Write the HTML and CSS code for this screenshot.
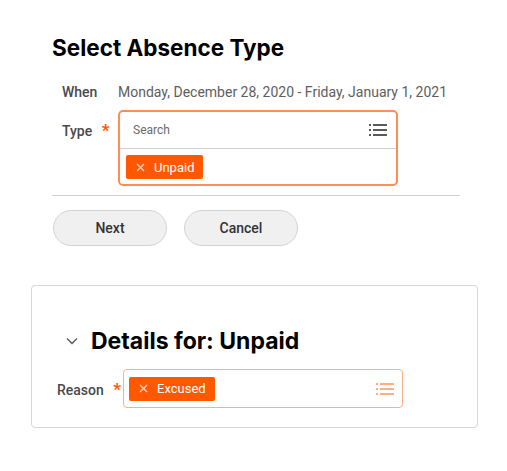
FILE: index.html
```html
<!DOCTYPE html>
<html lang="en">
<head>
    <meta charset="UTF-8">
    <meta name="viewport" content="width=device-width, initial-scale=1.0">
    <title>Select Absence Type</title>
    <link rel="stylesheet" href="styles.css">
</head>
<body>

    <div class="page">
        <section class="absence-type">
            <h1>Select Absence Type</h1>

            <div class="field-row when-row">
                <span class="field-label">When</span>
                <span class="field-value">Monday, December 28, 2020 - Friday, January 1, 2021</span>
            </div>

            <div class="field-row type-row">
                <span class="field-label">Type <span class="required">*</span></span>
                <div class="prompt prompt-open">
                    <div class="prompt-search">
                        <span class="placeholder">Search</span>
                        <svg class="list-icon" width="18" height="14" viewBox="0 0 18 14">
                            <rect x="0" y="1" width="2" height="2" />
                            <rect x="4" y="1" width="14" height="2" />
                            <rect x="0" y="6" width="2" height="2" />
                            <rect x="4" y="6" width="14" height="2" />
                            <rect x="0" y="11" width="2" height="2" />
                            <rect x="4" y="11" width="14" height="2" />
                        </svg>
                    </div>
                    <div class="prompt-selected">
                        <span class="pill">
                            <svg class="pill-x" width="9" height="9" viewBox="0 0 9 9">
                                <path d="M1 1 L8 8 M8 1 L1 8" />
                            </svg>
                            Unpaid
                        </span>
                    </div>
                </div>
            </div>

            <hr class="divider">

            <div class="actions">
                <button class="btn">Next</button>
                <button class="btn">Cancel</button>
            </div>
        </section>

        <section class="details-card">
            <div class="details-head">
                <svg class="chevron" width="12" height="8" viewBox="0 0 12 8">
                    <path d="M1 1.5 L6 6.5 L11 1.5" />
                </svg>
                <h2>Details for: Unpaid</h2>
            </div>

            <div class="field-row reason-row">
                <span class="field-label">Reason <span class="required">*</span></span>
                <div class="prompt prompt-closed">
                    <span class="pill">
                        <svg class="pill-x" width="9" height="9" viewBox="0 0 9 9">
                            <path d="M1 1 L8 8 M8 1 L1 8" />
                        </svg>
                        Excused
                    </span>
                    <svg class="list-icon light" width="18" height="14" viewBox="0 0 18 14">
                        <rect x="0" y="1" width="2" height="2" />
                        <rect x="4" y="1" width="14" height="2" />
                        <rect x="0" y="6" width="2" height="2" />
                        <rect x="4" y="6" width="14" height="2" />
                        <rect x="0" y="11" width="2" height="2" />
                        <rect x="4" y="11" width="14" height="2" />
                    </svg>
                </div>
            </div>
        </section>
    </div>

</body>
</html>
```

FILE: styles.css
```css
:root {
    --heading-color: #000000;
    --label-color: #494949;
    --value-color: #5e5e5e;
    --orange: #ff5800;
    --orange-border: #ff8d55;
    --orange-light: #ffaf85;
    --line-color: #cfcfcf;
    --btn-bg: #f0f0f0;
}

body {
    margin: 0;
    font-family: Roboto, "Liberation Sans", sans-serif;
    background: #ffffff;
}

.page {
    padding: 34px 0 0 31px;
    width: 447px;
}

/* --- top section --- */
.absence-type {
    padding-left: 21px;
    width: 408px;
}

h1 {
    margin: 0;
    font-family: Inter, sans-serif;
    font-size: 22.5px;
    line-height: 28px;
    font-weight: 700;
    color: var(--heading-color);
}

.field-row {
    display: flex;
    align-items: flex-start;
}

.field-label {
    flex: 0 0 auto;
    font-size: 14px;
    font-weight: 500;
    color: var(--label-color);
}

.required {
    color: var(--orange);
    font-size: 17px;
    font-weight: 700;
    margin-left: 6px;
}

.when-row {
    margin-top: 20px;
    padding-left: 10px;
    line-height: 20px;
}
.when-row .field-label { width: 56px; }

.field-value {
    font-size: 14px;
    color: var(--value-color);
}

.type-row {
    margin-top: 8px;
    padding-left: 10px;
}
.type-row .field-label {
    width: 56px;
    line-height: 20px;
    margin-top: 10px;
}

.prompt-open {
    width: 276px;
    border: 2px solid var(--orange-border);
    border-radius: 5px;
}

.prompt-search {
    height: 36px;
    display: flex;
    align-items: center;
    justify-content: space-between;
    padding: 0 9px 0 13px;
    border-bottom: 1px solid var(--line-color);
}

.placeholder {
    font-size: 12px;
    color: #6b6b6b;
}

.list-icon { fill: #5a5a5a; }
.list-icon.light { fill: var(--orange-light); }

.prompt-selected {
    padding: 6px 6px 5px 6px;
}

.pill {
    display: inline-flex;
    align-items: center;
    height: 24px;
    padding: 0 9px 0 10px;
    background: var(--orange);
    color: #ffffff;
    font-size: 13px;
    font-weight: 400;
    border-radius: 2px;
    gap: 9px;
}

.pill-x {
    stroke: #ffd3bd;
    stroke-width: 1.4;
    fill: none;
}

.divider {
    margin: 9px 0 0 0;
    border: none;
    border-top: 1px solid var(--line-color);
}

.actions {
    display: flex;
    gap: 17px;
    margin-top: 14px;
    padding-left: 1px;
}

.btn {
    width: 114px;
    height: 36px;
    border: 1px solid #d4d4d4;
    border-radius: 18px;
    background: var(--btn-bg);
    font-family: Roboto, sans-serif;
    font-size: 14px;
    font-weight: 500;
    color: #333333;
}

/* --- details card --- */
.details-card {
    margin-top: 39px;
    height: 141px;
    border: 1px solid #d6d6dc;
    border-radius: 4px;
    padding: 0 0 0 25px;
}

.details-head {
    display: flex;
    align-items: center;
    margin-top: 41px;
    padding-left: 9px;
    gap: 13px;
}

.chevron {
    stroke: #555555;
    stroke-width: 1.3;
    fill: none;
}

h2 {
    margin: 0;
    font-family: Inter, sans-serif;
    font-size: 23px;
    line-height: 28px;
    font-weight: 700;
    color: var(--heading-color);
}

.reason-row {
    margin-top: 14px;
    align-items: center;
}
.reason-row .field-label {
    width: 66px;
}

.prompt-closed {
    width: 280px;
    height: 39px;
    border: 1px solid var(--orange-light);
    border-radius: 4px;
    display: flex;
    align-items: center;
    justify-content: space-between;
    padding: 0 8px 0 5px;
    box-sizing: border-box;
}
```
